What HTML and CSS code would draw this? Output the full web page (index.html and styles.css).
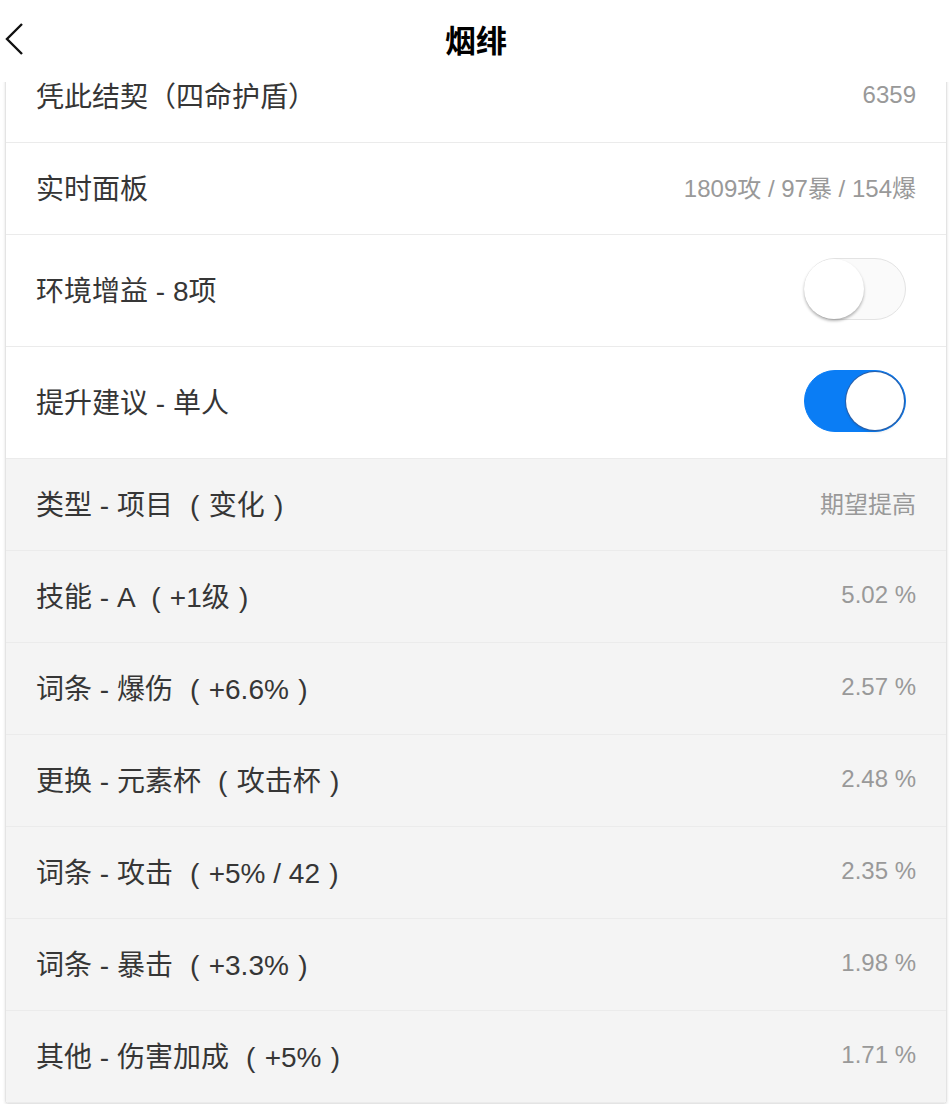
FILE: index.html
```html
<!DOCTYPE html>
<html lang="zh-CN">
<head>
    <meta charset="UTF-8">
    <meta name="viewport" content="width=device-width, initial-scale=1.0">
    <title>烟绯</title>
    <link rel="stylesheet" href="styles.css">
</head>
<body>
    <header class="topbar">
        <span class="back">
            <svg width="20" height="34" viewBox="0 0 20 34">
                <path d="M18 2 L3 17 L18 32" fill="none" stroke="#111" stroke-width="2.4" stroke-linejoin="miter"/>
            </svg>
        </span>
        <h1 class="title">烟绯</h1>
    </header>

    <div class="page">
        <div class="card">
            <div class="row">
                <span class="label">凭此结契（四命护盾）</span>
                <span class="value">6359</span>
            </div>
            <div class="row">
                <span class="label">实时面板</span>
                <span class="value">1809攻 / 97暴 / 154爆</span>
            </div>
            <div class="row row-tall">
                <span class="label">环境增益 - 8项</span>
                <span class="switch"><span class="knob"></span></span>
            </div>
            <div class="row row-tall">
                <span class="label">提升建议 - 单人</span>
                <span class="switch on"><span class="knob"></span></span>
            </div>

            <div class="sub">
                <div class="row">
                    <span class="label">类型 - 项目 <span class="paren">(</span>变化<span class="paren">)</span></span>
                    <span class="value">期望提高</span>
                </div>
                <div class="row">
                    <span class="label">技能 - A <span class="paren">(</span>+1级<span class="paren">)</span></span>
                    <span class="value">5.02 %</span>
                </div>
                <div class="row">
                    <span class="label">词条 - 爆伤 <span class="paren">(</span>+6.6%<span class="paren">)</span></span>
                    <span class="value">2.57 %</span>
                </div>
                <div class="row">
                    <span class="label">更换 - 元素杯 <span class="paren">(</span>攻击杯<span class="paren">)</span></span>
                    <span class="value">2.48 %</span>
                </div>
                <div class="row">
                    <span class="label">词条 - 攻击 <span class="paren">(</span>+5% / 42<span class="paren">)</span></span>
                    <span class="value">2.35 %</span>
                </div>
                <div class="row">
                    <span class="label">词条 - 暴击 <span class="paren">(</span>+3.3%<span class="paren">)</span></span>
                    <span class="value">1.98 %</span>
                </div>
                <div class="row">
                    <span class="label">其他 - 伤害加成 <span class="paren">(</span>+5%<span class="paren">)</span></span>
                    <span class="value">1.71 %</span>
                </div>
                <div class="watermark">BBS.NGA.CN</div>
            </div>
        </div>
    </div>
</body>
</html>
```

FILE: styles.css
```css
body {
    margin: 0;
    background: #fff;
    font-family: "Liberation Sans", "Noto Sans CJK SC", sans-serif;
    color: #333;
}

.topbar {
    position: fixed;
    top: 0;
    left: 0;
    right: 0;
    height: 82px;
    background: #fff;
    display: flex;
    align-items: center;
    justify-content: center;
    z-index: 2;
}

.back {
    position: absolute;
    left: 4px;
    top: 22px;
}

.title {
    margin: 0;
    font-size: 31px;
    font-weight: bold;
    color: #000;
    line-height: 1;
}

.page {
    padding: 51px 5px 0;
}

.card {
    border: 1px solid #e4e4e4;
    border-top: none;
    border-radius: 0 0 4px 4px;
    box-shadow: 0 1px 3px rgba(0, 0, 0, 0.12);
    overflow: hidden;
}

.row {
    display: flex;
    align-items: center;
    justify-content: space-between;
    box-sizing: border-box;
    height: 92px;
    padding: 0 30px 4px;
    border-bottom: 1px solid #ebebeb;
}

.row-tall {
    height: 112px;
}

.sub {
    position: relative;
    background: #f4f4f4;
}

.sub .row:last-of-type {
    border-bottom: none;
}

.label {
    font-size: 28px;
    color: #363636;
}

.paren {
    display: inline-block;
    width: 1em;
    text-align: center;
}

.value {
    font-size: 24px;
    color: #999;
}

.switch {
    width: 100px;
    height: 60px;
    border: 1px solid #e3e3e3;
    border-radius: 31px;
    background: #fafafa;
    display: flex;
    align-items: center;
    margin-right: 10px;
}

.knob {
    width: 60px;
    height: 60px;
    border-radius: 50%;
    background: #fff;
    box-shadow: 0 2px 3px rgba(0, 0, 0, 0.3);
    margin-left: -1px;
}

.switch.on {
    background: #0a7df5;
    border-color: #0a7df5;
    justify-content: flex-end;
}

.switch.on .knob {
    box-shadow: 0 0 0 1px #2a5fa8, 0 2px 3px rgba(0, 0, 0, 0.15);
    width: 58px;
    height: 58px;
    margin-right: 1px;
}

.watermark {
    position: absolute;
    right: 130px;
    bottom: 28px;
    font-size: 40px;
    letter-spacing: 10px;
    color: rgba(0, 0, 0, 0.02);
}
```
